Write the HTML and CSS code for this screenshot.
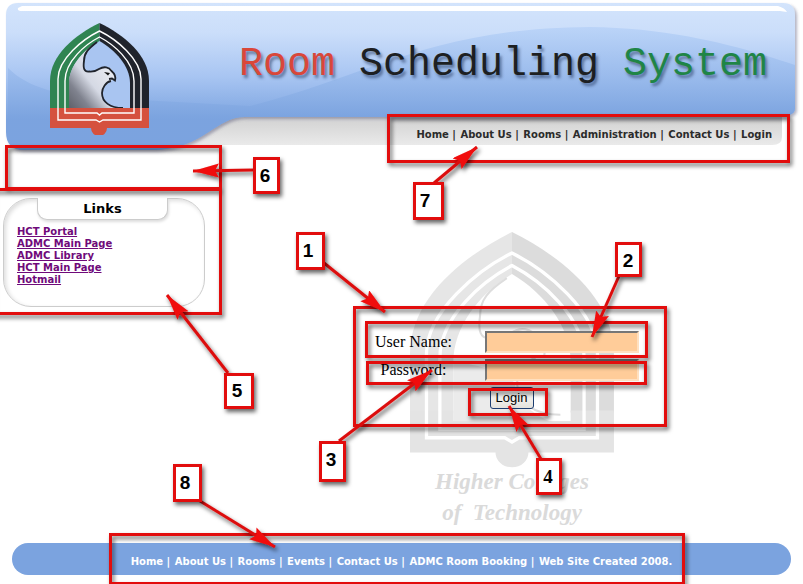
FILE: index.html
```html
<!DOCTYPE html>
<html lang="en">
<head>
<meta charset="utf-8">
<title>Room Scheduling System</title>
<link rel="stylesheet" href="styles.css">
</head>
<body>
<div class="page">
  <header class="header">
    <svg class="header-art" viewBox="0 0 803 156" preserveAspectRatio="none" aria-hidden="true">
      <defs>
        <linearGradient id="sky" x1="0" y1="0" x2="0" y2="1">
          <stop offset="0" stop-color="#d3e4fc"/><stop offset=".2" stop-color="#cbdefa"/><stop offset=".5" stop-color="#a8c5f2"/><stop offset=".8" stop-color="#7ba3df"/><stop offset="1" stop-color="#7ba3df"/>
        </linearGradient>
        <linearGradient id="hill" gradientUnits="userSpaceOnUse" x1="0" y1="27" x2="0" y2="117">
          <stop offset="0" stop-color="#b3cff7"/><stop offset="1" stop-color="#7ba3df"/>
        </linearGradient>
        <linearGradient id="strip" gradientUnits="userSpaceOnUse" x1="0" y1="116" x2="0" y2="145">
          <stop offset="0" stop-color="#d0d0d0"/><stop offset="1" stop-color="#eaeaea"/>
        </linearGradient>
        <filter id="soft" x="-5%" y="-5%" width="110%" height="115%"><feDropShadow dx="2" dy="2" stdDeviation="1.5" flood-color="#557" flood-opacity=".45"/></filter>
      </defs>
      <path d="M170 116H782V137Q782 145 772 145H170Z" fill="url(#strip)"/>
      <path filter="url(#soft)" d="M18 3H783Q795 3 795 15V108Q795 115 787 115V117H245C215 117 205 148 155 150H24Q6 150 6 132V15Q6 3 18 3Z" fill="url(#sky)"/>
      <path d="M8 68C28 88 60 96 105 98L250 106C370 76 430 28 590 27C680 28 750 50 795 65V108Q795 115 787 115V117H245C215 117 205 148 155 150H24Q8 149 8 132Z" fill="url(#hill)" opacity=".72"/>
      <path d="M22 6H778Q785 8 787 12L780 11H22Q17 11 18 8Z" fill="#fff"/>
    </svg>
    <svg class="logo" viewBox="0 0 99 112" role="img" aria-label="Higher Colleges of Technology">
      <defs>
        <linearGradient id="wing" x1="0" y1="1" x2="1" y2="0"><stop offset="0" stop-color="#5d5f68"/><stop offset=".2" stop-color="#80838f"/><stop offset=".4" stop-color="#d5d9e4"/><stop offset="1" stop-color="#fff"/></linearGradient>
      </defs>
      <path d="M49.500 0C25 12 0 32 0 58V86H49.500Z" fill="#2f8452"/>
      <path d="M49.500 0C74 12 99 32 99 58V86H49.500Z" fill="#20242c"/>
      <path d="M49.500 18C34 27 19 43 19 60V86H80V60C80 43 65 27 49.500 18Z" fill="#a9c5f1"/>
      <path d="M47 19C31 29 19 45 19 60V86H73C60 84 52 80 52 73C52 67 55 62 60 58L65 56C64 51 63 44 56 44Q52 44 49 46Q43 50 37 48.500C31 46 33 37 34 32Q37 26 47 19Z" fill="url(#wing)"/>
      <path d="M47 19C38 26 34 30 34 38C33 45 34 49 39 48.500Q45 49 49 46C54 43 59 44 61.500 48C65 51 66 54 65 57.500L62 55.500L59 56M61 58C56 59 52 65 52 70C52 79 60 85 73 85" fill="none" stroke="#20242c" stroke-width="1.800"/>
      <path d="M54 49L60 50L58 52.500Z" fill="#111"/>
      <path d="M0 85H99V105H57A8 8 0 0 1 41 105H0Z" fill="#d5513e"/>
      <path d="M49.500 8C33 16 8 36 8 56V97H46L49.500 99L53 97H91V56C91 36 66 16 49.500 8ZM49.500 14C36 21 15 38 15 58V90H47L49.500 92L52 90H84V58C84 38 63 21 49.500 14Z" fill="none" stroke="#fff" stroke-width="1.400"/>
    </svg>
    <h1 class="title"><span class="red">Room</span> <span class="dark">Scheduling</span> <span class="green">System</span></h1>
    <nav class="menu"><a href="#">Home</a> <span class="bar">|</span> <a href="#">About Us</a> <span class="bar">|</span> <a href="#">Rooms</a> <span class="bar">|</span> <a href="#">Administration</a> <span class="bar">|</span> <a href="#">Contact Us</a> <span class="bar">|</span> <a href="#">Login</a></nav>
  </header>

  <main class="main">
    <aside class="sidebar">
      <section class="links">
        <h2 class="links-title">Links</h2>
        <ul class="links-list">
          <li><a href="#">HCT Portal</a></li>
          <li><a href="#">ADMC Main Page</a></li>
          <li><a href="#">ADMC Library</a></li>
          <li><a href="#">HCT Main Page</a></li>
          <li><a href="#">Hotmail</a></li>
        </ul>
      </section>
    </aside>
    <section class="content">
      <svg class="watermark" viewBox="0 0 204 300" aria-hidden="true">
        <g transform="scale(2.060 2.100)">
          <path d="M49.500 0C25 12 0 32 0 58V86H49.500Z" fill="#e6e6e6"/>
          <path d="M49.500 0C74 12 99 32 99 58V86H49.500Z" fill="#dcdcdc"/>
          <path d="M49.500 20C34 29 21 45 21 62V92H78V62C78 45 65 29 49.500 20Z" fill="#fff"/>
          <path d="M21 62V92H73C60 88 51 80 51 72C45 66 28 62 21 62Z" fill="#ebebeb"/>
          <path d="M47 22C38 28 34 32 34 40C33 47 34 51 39 50.500Q45 51 49 48C54 45 59 46 61.500 50C65 53 66 56 65 59.500M61 60C56 61 52 67 52 72C52 81 60 87 73 87" fill="none" stroke="#ddd" stroke-width="1"/>
          <path d="M0 85H21V90H78V85H99V105H57.500A8 7 0 0 1 41.500 105H0Z" fill="#e4e4e4"/>
          <path d="M49.500 10C33 18 8 38 8 58V98H46L49.500 100L53 98H91V58C91 38 66 18 49.500 10ZM49.500 16C36 23 14.500 40 14.500 60V94H84.500V60C84.500 40 63 23 49.500 16Z" fill="none" stroke="#fff" stroke-width="1.600"/>
        </g>
        <text class="watermark-text" x="102" y="257">Higher Colleges</text>
        <text class="watermark-text" x="102" y="288">of&#160; Technology</text>
      </svg>
      <form class="login">
        <label for="user">User Name:</label><input id="user" type="text">
        <label for="pass">Password:</label><input id="pass" type="password">
        <button type="button">Login</button>
      </form>
    </section>
  </main>

  <footer class="footer"><a href="#">Home</a> <span class="bar">|</span> <a href="#">About Us</a> <span class="bar">|</span> <a href="#">Rooms</a> <span class="bar">|</span> <a href="#">Events</a> <span class="bar">|</span> <a href="#">Contact Us</a> <span class="bar">|</span> <a href="#">ADMC Room Booking</a> <span class="bar">|</span> Web Site Created 2008.</footer>

  <!-- Numbered callouts drawn over the page -->
  <svg class="callouts" viewBox="0 0 803 584">
    <defs>
      <marker id="head" markerUnits="userSpaceOnUse" markerWidth="28" markerHeight="16" refX="26" refY="7" orient="auto"><path d="M0 0L26 7L0 14L4 7Z" fill="#f00a0a"/></marker>
      <filter id="drop" filterUnits="userSpaceOnUse" x="-10" y="0" width="820" height="600"><feDropShadow dx="2" dy="3" stdDeviation="2" flood-color="#000" flood-opacity=".6"/></filter>
    </defs>
    <g class="frames" filter="url(#drop)">
      <rect x="388.500" y="115.500" width="400" height="46"/>
      <rect x="6.500" y="146.500" width="214" height="42"/>
      <rect x="-8" y="189.500" width="228.500" height="124"/>
      <rect x="354.500" y="307.500" width="311" height="118"/>
      <rect x="366.500" y="322.500" width="280" height="34"/>
      <rect x="367.500" y="362.500" width="278" height="21"/>
      <rect x="469.500" y="389.500" width="77" height="25"/>
      <rect x="110.500" y="534.500" width="573" height="49"/>
    </g>
    <g class="arrows" filter="url(#drop)">
      <path d="M324 263L385 312"/>
      <path d="M619 276L592 337"/>
      <path d="M339 441L432 370"/>
      <path d="M541 459L509 406"/>
      <path d="M228 373L167 295"/>
      <path d="M254 170L193 171"/>
      <path d="M434 183L477 147"/>
      <path d="M200 501L275 547"/>
    </g>
    <g class="tags" filter="url(#drop)">
      <rect x="297.500" y="233.500" width="26" height="35"/>
      <rect x="616.500" y="243.500" width="24" height="32"/>
      <rect x="320.500" y="442.500" width="24" height="38"/>
      <rect x="537.500" y="459.500" width="23" height="34"/>
      <rect x="225.500" y="374.500" width="27" height="33"/>
      <rect x="254.500" y="158.500" width="24" height="34"/>
      <rect x="414.500" y="183.500" width="28" height="35"/>
      <rect x="174.500" y="465.500" width="26" height="35"/>
    </g>
    <g class="numbers">
      <text x="308" y="257">1</text>
      <text x="628" y="267">2</text>
      <text x="331" y="466">3</text>
      <text class="serif" x="548" y="483">4</text>
      <text x="237" y="397">5</text>
      <text x="265" y="182">6</text>
      <text x="425" y="207">7</text>
      <text x="185" y="489">8</text>
    </g>
  </svg>
</div>
</body>
</html>
```
FILE: styles.css
```css
body {
  margin: 0;
  background: #fff;
  color: #000;
  font-family: "DejaVu Sans", Verdana, sans-serif;
}

a {
  color: inherit;
  text-decoration: none;
}

.page {
  position: relative;
  overflow: hidden;
}

.header {
  position: relative;
  display: grid;
  grid-template-columns: 99px 1fr;
  grid-template-rows: 117px 33px;
  padding-left: 50px;
}

.header-art {
  position: absolute;
  left: 0;
  top: 0;
  width: 100%;
  height: 156px;
}

.logo {
  position: relative;
  grid-row: 1 / 3;
  width: 99px;
  height: 112px;
  margin-top: 23px;
}

.title {
  position: relative;
  margin: 0;
  padding: 41px 36px 0 0;
  text-align: right;
  white-space: nowrap;
  font: 40px/48px "Liberation Mono", monospace;
  text-shadow: 2px 3px 3px rgba(40, 60, 100, .6);
}

.red { color: #d9473a; }
.dark { color: #1d1f22; }
.green { color: #1f8546; }

.menu {
  position: relative;
  padding: 10px 31px 0 0;
  text-align: right;
  white-space: nowrap;
  color: #2b2b2b;
  font-size: 10px;
  line-height: 16px;
  font-weight: bold;
}

.bar {
  margin-right: 1px;
}

.main {
  display: grid;
  grid-template-columns: 220px 1fr;
}

.sidebar {
  padding: 48px 15px 0 3px;
}

.links {
  height: 107px;
  border: 1px solid #ccc;
  border-radius: 28px;
  box-shadow: inset 2px 2px 4px #ddd;
}

.links-title {
  box-sizing: border-box;
  width: 131px;
  height: 22px;
  margin: -1px 0 0 33px;
  border: 1px solid #ccc;
  border-top: 0;
  border-radius: 0 0 10px 10px;
  background: #fff;
  box-shadow: 1px 2px 3px #ddd;
  text-align: center;
  font-size: 13px;
  line-height: 21px;
}

.links-list {
  margin: 6px 0 0 13px;
  padding: 0;
  list-style: none;
  color: #6f0a7a;
  font-size: 10px;
  line-height: 12px;
  font-weight: bold;
}

.links-list a {
  text-decoration: underline;
}

.content {
  display: grid;
  justify-items: center;
  align-items: start;
  padding-top: 82px;
}

.watermark {
  grid-area: 1 / 1;
  width: 204px;
  height: 300px;
  overflow: visible;
}

.watermark-text {
  fill: #dadada;
  text-anchor: middle;
  font: italic bold 23px "Liberation Serif", serif;
}

.login {
  position: relative;
  grid-area: 1 / 1;
  display: grid;
  grid-template-columns: 106px 154px;
  column-gap: 18px;
  row-gap: 6px;
  padding-right: 24px;
  margin-top: 99px;
  align-items: center;
  font: 16px/22px "Liberation Serif", serif;
}

.login label {
  text-align: center;
}

.login input {
  box-sizing: border-box;
  width: 100%;
  height: 22px;
  border: 2px solid;
  border-color: #777 #ffe0c0 #ffe0c0 #777;
  background: #fc9;
}

.login button {
  grid-column: 1 / 3;
  justify-self: center;
  width: 44px;
  height: 22px;
  margin-left: 24px;
  padding: 0;
  border: 1px solid #1c3d70;
  border-radius: 3px;
  background: linear-gradient(#fff, #e4e2dc);
  color: #000;
  font: 13px/18px "Liberation Sans", sans-serif;
}

.footer {
  box-sizing: border-box;
  height: 32px;
  margin: 11px 12px 9px;
  padding-top: 3px;
  border-radius: 16px;
  background: #7ba3df;
  color: #fff;
  text-align: center;
  white-space: nowrap;
  font-size: 10px;
  line-height: 32px;
  font-weight: bold;
}

.callouts {
  position: absolute;
  left: 0;
  top: 0;
  width: 803px;
  height: 584px;
  pointer-events: none;
}

.frames {
  fill: none;
  stroke: #e20c0c;
  stroke-width: 3px;
}

.arrows {
  fill: none;
  stroke: #dc1010;
  stroke-width: 3px;
}

.arrows path {
  marker-end: url(#head);
}

.tags {
  fill: #fff;
  stroke: #e20c0c;
  stroke-width: 3px;
}

.numbers {
  text-anchor: middle;
  font: bold 19px "Liberation Sans", sans-serif;
}

.serif {
  font-family: "Liberation Serif", serif;
}
```
